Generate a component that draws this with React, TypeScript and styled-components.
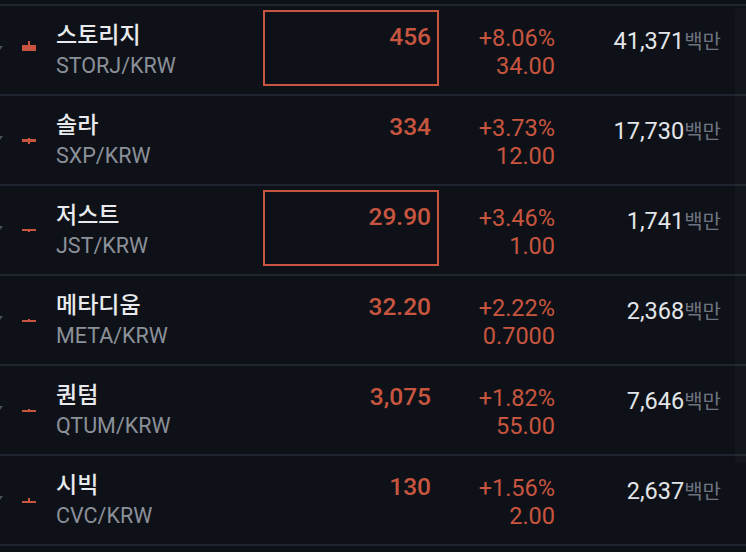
import React from 'react';
import styled, { createGlobalStyle } from 'styled-components';

const GlobalStyle = createGlobalStyle`
  html, body {
    margin: 0;
    padding: 0;
    background: #0e1218;
    overflow: hidden;
  }
`;

const RED = '#c8553f';
const LINE = '#1f2530';

const Page = styled.div`
  position: relative;
  width: 746px;
  height: 552px;
  overflow: hidden;
  background: #0e1218;
  font-family: Roboto, 'Noto Sans CJK KR', sans-serif;
  padding-top: 4px;
  box-sizing: border-box;
`;

const Row = styled.div`
  display: grid;
  grid-template-columns: 56px 207px 176px 116px 166px 1fr;
  height: 90px;
  box-sizing: border-box;
  border-top: 2px solid ${LINE};
`;

const Lead = styled.div`
  display: flex;
  align-items: flex-start;
  padding-top: 30px;
`;

const Arrow = styled.svg`
  width: 3px;
  height: 4px;
  margin-top: 10px;
  flex-shrink: 0;
`;

const Candle = styled.svg`
  width: 14px;
  height: 20px;
  margin-left: 19px;
  flex-shrink: 0;
`;

const NameCell = styled.div`
  display: flex;
  flex-direction: column;
  padding-top: 14px;
`;

const Name = styled.div`
  color: #e8eaed;
  font-size: 23px;
  font-weight: 500;
  line-height: 31px;
`;

const Symbol = styled.div`
  color: #8c9099;
  font-size: 21.5px;
  line-height: 30px;
`;

const PriceCell = styled.div`
  padding-top: 4px;
`;

const PriceBox = styled.div<{ $selected?: boolean }>`
  height: 76px;
  box-sizing: border-box;
  border: 2px solid ${(p) => (p.$selected ? RED : 'transparent')};
  padding: 11px 6px 0 0;
  text-align: right;
  color: ${RED};
  font-size: 24.5px;
  font-weight: 500;
  line-height: 28px;
`;

const ChangeCell = styled.div`
  display: flex;
  flex-direction: column;
  align-items: flex-end;
  padding-top: 18px;
  color: ${RED};
  font-size: 23.5px;
  line-height: 28px;
`;

const VolumeCell = styled.div`
  display: flex;
  justify-content: flex-end;
  align-items: baseline;
  padding-top: 21px;
  line-height: 28px;
`;

const VolumeNum = styled.span`
  color: #e3e5e8;
  font-size: 23.5px;
`;

const VolumeUnit = styled.span`
  color: #6e7380;
  font-size: 20px;
`;

const Scrollbar = styled.div`
  position: absolute;
  right: 0;
  top: 8px;
  width: 11px;
  height: 455px;
  background: rgba(255, 255, 255, 0.025);
  border-radius: 3px 0 0 3px;
`;

type CandleData = { wt: number; wb: number; bt: number; bb: number };

type Coin = {
  name: string;
  symbol: string;
  price: string;
  rate: string;
  diff: string;
  volume: string;
  selected?: boolean;
  candle: CandleData;
};

const coins: Coin[] = [
  { name: '스토리지', symbol: 'STORJ/KRW', price: '456', rate: '+8.06%', diff: '34.00', volume: '41,371', selected: true, candle: { wt: 5, wb: 9, bt: 9, bb: 15 } },
  { name: '솔라', symbol: 'SXP/KRW', price: '334', rate: '+3.73%', diff: '12.00', volume: '17,730', candle: { wt: 12, wb: 18, bt: 13, bb: 16 } },
  { name: '저스트', symbol: 'JST/KRW', price: '29.90', rate: '+3.46%', diff: '1.00', volume: '1,741', selected: true, candle: { wt: 13, wb: 16, bt: 13, bb: 15 } },
  { name: '메타디움', symbol: 'META/KRW', price: '32.20', rate: '+2.22%', diff: '0.7000', volume: '2,368', candle: { wt: 13, wb: 16, bt: 14, bb: 16 } },
  { name: '퀀텀', symbol: 'QTUM/KRW', price: '3,075', rate: '+1.82%', diff: '55.00', volume: '7,646', candle: { wt: 13, wb: 16, bt: 14, bb: 16 } },
  { name: '시빅', symbol: 'CVC/KRW', price: '130', rate: '+1.56%', diff: '2.00', volume: '2,637', candle: { wt: 12, wb: 17, bt: 15, bb: 17 } },
];

const MiniCandle = ({ c }: { c: CandleData }) => (
  <Candle viewBox="0 0 14 20">
    <rect x={6} y={c.wt} width={2} height={c.wb - c.wt} fill={RED} />
    <rect x={0} y={c.bt} width={14} height={c.bb - c.bt} fill={RED} />
  </Candle>
);

const CoinRow = ({ coin }: { coin: Coin }) => (
  <Row>
    <Lead>
      <Arrow viewBox="0 0 3 4">
        <polygon points="0,0 3,0 0,4" fill="#4a505b" />
      </Arrow>
      <MiniCandle c={coin.candle} />
    </Lead>
    <NameCell>
      <Name>{coin.name}</Name>
      <Symbol>{coin.symbol}</Symbol>
    </NameCell>
    <PriceCell>
      <PriceBox $selected={coin.selected}>{coin.price}</PriceBox>
    </PriceCell>
    <ChangeCell>
      <span>{coin.rate}</span>
      <span>{coin.diff}</span>
    </ChangeCell>
    <VolumeCell>
      <VolumeNum>{coin.volume}</VolumeNum>
      <VolumeUnit>백만</VolumeUnit>
    </VolumeCell>
    <div />
  </Row>
);

const App = () => (
  <>
    <GlobalStyle />
    <Page>
      {coins.map((coin) => (
        <CoinRow key={coin.symbol} coin={coin} />
      ))}
      <Row />
      <Scrollbar />
    </Page>
  </>
);

export default App;
